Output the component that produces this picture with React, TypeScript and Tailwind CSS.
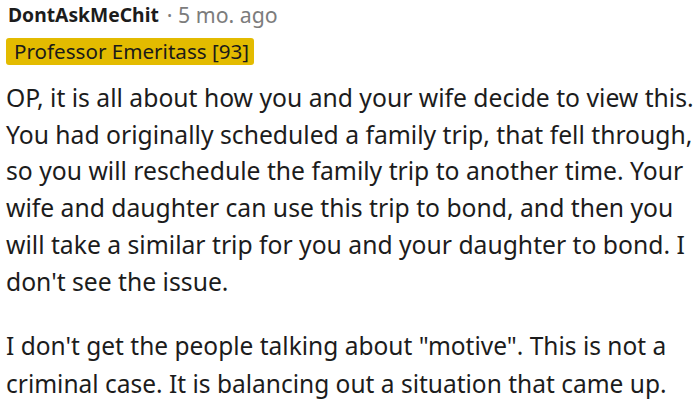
export default function App() {
  const font = { fontFamily: '"Noto Sans", sans-serif' };

  return (
    <div className="w-[700px] h-[403px] overflow-hidden bg-white text-[#1c1c1c]" style={font}>
      <div className="pl-[6px] pt-[2px]">
        <div className="flex items-center leading-[26px]">
          <span className="pl-[2px] text-[19.3px] font-bold text-[#1c1c1c]">DontAskMeChit</span>
          <span className="ml-[8px] text-[21.3px] text-[#7c7c7c]">· 5 mo. ago</span>
        </div>
        <div className="mt-[10px] inline-block rounded-[3px] bg-[#e3bb00] pl-[8px] pr-[5px] text-[20.6px] leading-[27px] text-[#1a1a1a]">
          Professor Emeritass [93]
        </div>

        <p className="mt-[15px] text-[24.7px] leading-[36.7px] whitespace-nowrap">
          OP, it is all about how you and your wife decide to view this.
          <br />
          You had originally scheduled a family trip, that fell through,
          <br />
          so you will reschedule the family trip to another time. Your
          <br />
          wife and daughter can use this trip to bond, and then you
          <br />
          will take a similar trip for you and your daughter to bond. I
          <br />
          don't see the issue.
        </p>

        <p className="mt-[27px] text-[24.5px] leading-[37.4px] whitespace-nowrap">
          I don't get the people talking about "motive". This is not a
          <br />
          criminal case. It is balancing out a situation that came up.
        </p>
      </div>
    </div>
  );
}
